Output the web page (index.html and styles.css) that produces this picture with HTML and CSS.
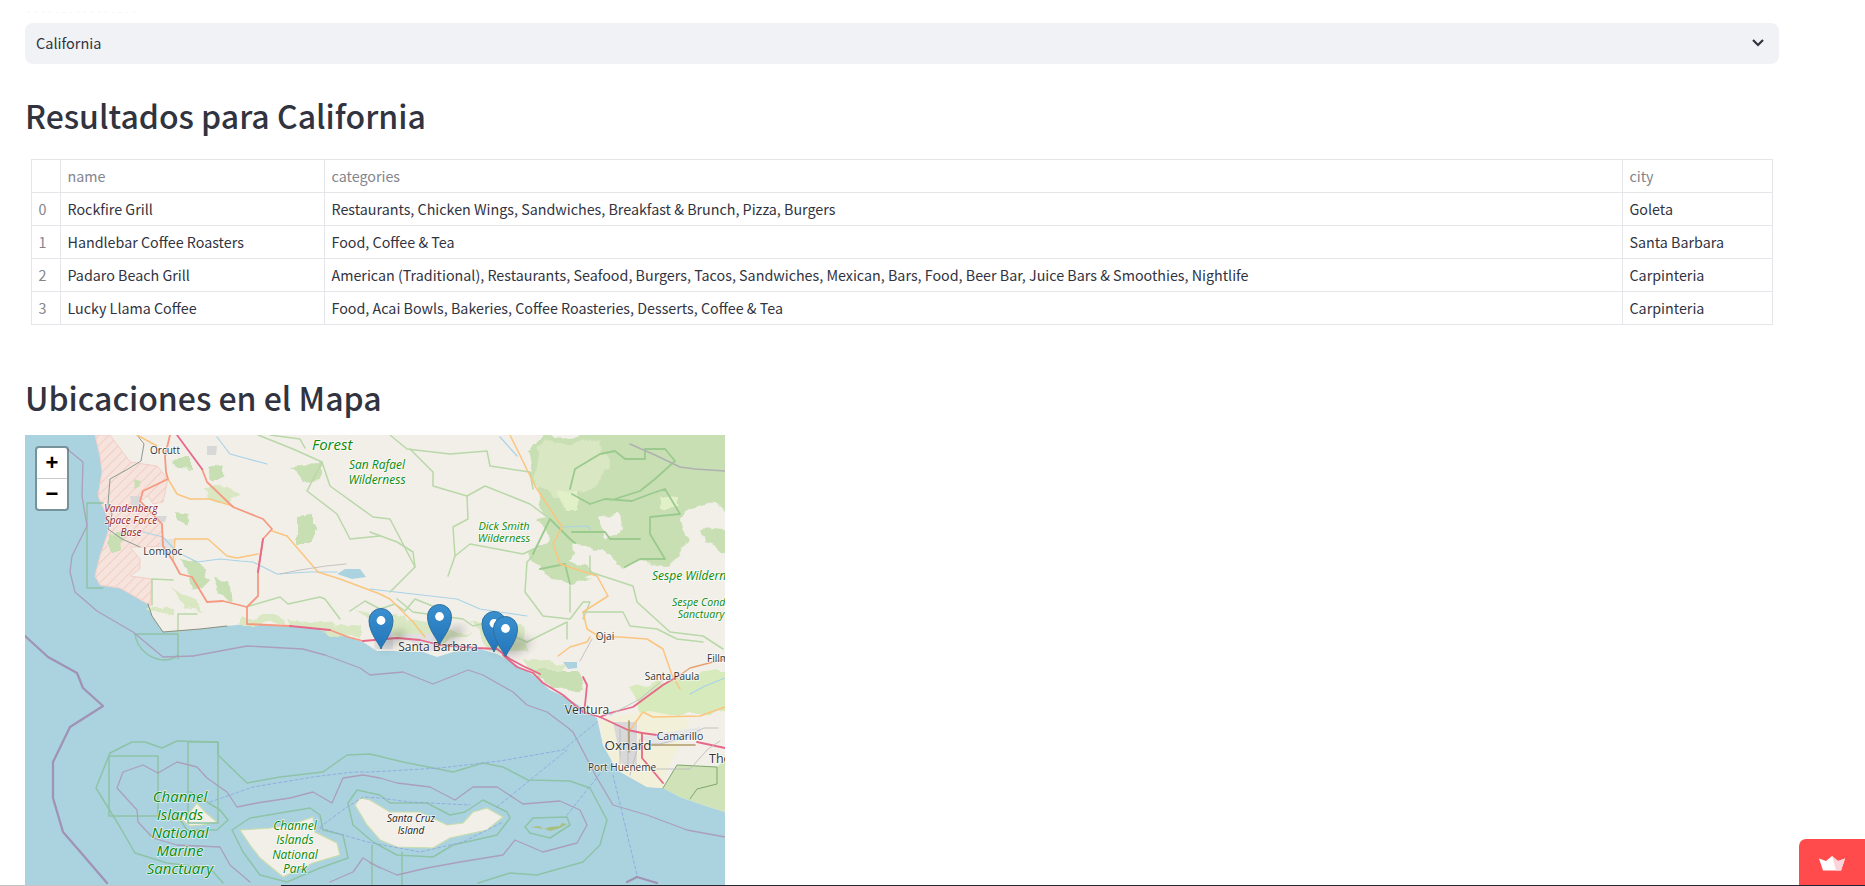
FILE: index.html
```html
<!DOCTYPE html>
<html lang="es">
<head>
<meta charset="utf-8">
<title>Resultados para California</title>
<link rel="stylesheet" href="styles.css">
</head>
<body>
<div class="ghost-label"></div>
<main class="page">
  <div class="select">
    <span class="select-value">California</span>
    <svg class="chevron" width="16" height="16" viewBox="0 0 16 16"><path d="M3 5l5 5 5-5" fill="none" stroke="#31333f" stroke-width="2.200"/></svg>
  </div>
  <h2 class="heading first">Resultados para California</h2>
  <div class="table-wrap">
    <table class="data">
      <colgroup><col class="c0"><col class="c1"><col class="c2"><col class="c3"></colgroup>
      <thead><tr><th></th><th>name</th><th>categories</th><th>city</th></tr></thead>
      <tbody>
        <tr><th>0</th><td>Rockfire Grill</td><td>Restaurants, Chicken Wings, Sandwiches, Breakfast &amp; Brunch, Pizza, Burgers</td><td>Goleta</td></tr>
        <tr><th>1</th><td>Handlebar Coffee Roasters</td><td>Food, Coffee &amp; Tea</td><td>Santa Barbara</td></tr>
        <tr><th>2</th><td>Padaro Beach Grill</td><td>American (Traditional), Restaurants, Seafood, Burgers, Tacos, Sandwiches, Mexican, Bars, Food, Beer Bar, Juice Bars &amp; Smoothies, Nightlife</td><td>Carpinteria</td></tr>
        <tr><th>3</th><td>Lucky Llama Coffee</td><td>Food, Acai Bowls, Bakeries, Coffee Roasteries, Desserts, Coffee &amp; Tea</td><td>Carpinteria</td></tr>
      </tbody>
    </table>
  </div>
  <h2 class="heading second">Ubicaciones en el Mapa</h2>
  <div class="map">
    <svg class="tiles" width="700" height="450" viewBox="25 436 700 450">
      <defs>
        <pattern id="hatch" width="7" height="7" patternUnits="userSpaceOnUse" patternTransform="rotate(-45)">
          <rect width="7" height="7" fill="#f6e3dc"/><rect width="7" height="1" fill="#f0cdc6"/>
        </pattern>
        <linearGradient id="pinfill" x1="0" y1="0" x2="0" y2="1"><stop offset="0" stop-color="#3a90cf"/><stop offset="1" stop-color="#2375ba"/></linearGradient>
        <filter id="blur1" x="-40%" y="-40%" width="180%" height="180%"><feGaussianBlur stdDeviation="4"/></filter>
        <filter id="organic" x="-5%" y="-5%" width="110%" height="110%">
          <feTurbulence type="fractalNoise" baseFrequency="0.05" numOctaves="3" seed="4"/>
          <feDisplacementMap in="SourceGraphic" scale="14" xChannelSelector="R" yChannelSelector="G"/>
          <feGaussianBlur stdDeviation="0.7"/>
        </filter>
        <filter id="soft" x="0" y="0" width="100%" height="100%"><feGaussianBlur stdDeviation="0.35"/></filter>
        <g id="pin">
          <path d="M0 0C-2-6-12-16-12-28.500a12 12 0 0 1 24 0C12-16 2-6 0 0z" fill="url(#pinfill)" stroke="#2f6f9f" stroke-width="1"/>
          <circle cx="0" cy="-28.500" r="4.400" fill="#fff"/>
        </g>
      </defs>
      <rect x="25" y="436" width="700" height="450" fill="#aad3df"/>

      <g filter="url(#soft)">
      <!-- land -->
      <path fill="#f2efe9" d="M95 436L100 457 102 473 98 497 107 517 108 533 100 557 95 577 100 586 120 589 148 605 152 617 163 633 200 630 227 627 247 625 287 627 327 630 348 638 363 643 377 652 393 652 423 653 437 658 453 653 480 650 497 655 510 662 520 668 533 676 550 691 567 699 583 709 597 719 603 746 617 771 647 788 663 789 680 798 703 806 725 813V436z"/>
      <path fill="#f2efe9" stroke="#c8dcae" stroke-width="1.200" d="M240 831L270 829 292 825 313 818 315 833 337 844 340 856 313 864 283 878 260 859 250 846z"/>
      <path fill="#f2efe9" stroke="#c8dcae" stroke-width="1.200" d="M355 806L360 799 370 801 390 813 420 813 447 826 463 824 473 813 487 809 503 818 487 831 450 839 433 849 397 848 380 841 367 826z"/>
      <path fill="#f2efe9" stroke="#c8dcae" stroke-width="1.200" d="M190 813L197 804 205 813 217 823 202 826 190 827 180 819z"/>
      <path fill="#a9bf7c" d="M531 828l8-1 5 3 6-2 10-1 2-3 5 1-7 4-10 3-5-2-8-1z"/>

      <!-- vandenberg -->
      <path fill="url(#hatch)" stroke="#f3cfc8" stroke-width="1" d="M95 436L100 457 102 473 98 497 107 517 108 533 100 557 95 577 100 586 120 589 148 605 150 607 152 580 130 577 140 570 140 560 130 548 143 548 163 547 162 525 140 502 148 497 153 505 163 503 168 480 157 467 130 463 110 436z"/>

      <!-- vegetation -->
      <g fill="#c7dfb3" filter="url(#organic)">
        <path d="M527 447L543 440 637 430 735 430 735 510 700 505 690 510 680 520 690 540 680 555 665 565 640 562 625 568 605 555 590 550 575 545 570 560 595 575 575 580 550 575 535 560 530 555 550 540 535 520 550 518 535 490 530 465z"/>
        <path d="M700 530L735 533 735 553 703 543z"/>
        <path d="M287 467L320 465 320 480 305 482z"/>
        <path d="M297 517L315 515 315 545 297 545z"/>
        <path d="M207 465L227 462 225 480 210 480z"/>
        <path d="M177 513L188 515 187 525 177 522z"/>
        <path d="M170 460L190 458 190 473 175 472z"/>
        <path d="M180 560L200 565 210 585 190 590z"/>
        <path d="M213 580L227 582 230 600 218 596z"/>
        <path d="M110 537L122 535 123 550 110 550z"/>
        <path d="M133 480L142 482 140 488 134 487z"/>
        <path d="M530 670L580 670 583 690 553 691z"/>
        <path d="M530 555L575 570 590 580 570 585 545 575z"/>
      </g>
      <path fill="#cfe2b8" d="M663 789L677 766 717 768 725 760 725 813 703 806 680 798z"/>
      <g fill="#d9e8c2" filter="url(#organic)">
        <path d="M540 445L600 440 610 470 590 490 560 500 535 487z"/>
        <path d="M558 495L578 493 578 510 565 510z" fill="#e2f0c8"/>
        <path d="M660 497L678 498 678 510 662 510z" fill="#e2f0c8"/>
        <path d="M208 487L240 495 225 505 210 500z"/>
        <path d="M240 617L280 617 285 625 240 625z"/>
        <path d="M287 620L360 630 360 640 290 626z"/>
        <path d="M173 590L195 600 205 612 185 610z"/>
        <path d="M145 608L175 610 175 615 150 614z"/>
        <path d="M360 610L430 625 470 635 440 645 380 635z"/>
        <path d="M470 625L520 625 530 650 490 648z"/>
        <path d="M633 690L665 680 735 670 735 710 680 715 640 716z" fill="#d6eabb"/>
        <path d="M525 660L565 664 560 672 530 672z"/>
      </g>
      <path fill="#f2efe9" d="M597 518L620 515 623 530 608 540 603 530z" filter="url(#organic)"/>
      <path fill="#f2f0d8" d="M600 722L625 716 650 712 690 720 680 745 665 775 663 789 647 788 617 771 603 746z"/>
      <g fill="#d8d8d8">
        <path d="M207 447L217 447 216 456 207 456z"/>
        <path d="M130 497L140 497 140 507 132 508z"/>
        <path d="M157 517L167 517 165 523 157 523z"/>
        <path d="M160 540L175 540 172 550 160 548z" fill="#e2e2e2"/>
        <path d="M373 633L393 633 393 650 375 650z" fill="#e0e0e0"/>
        <path d="M400 635L440 635 440 653 420 650z" fill="#e0e0e0"/>
        <path d="M613 723L637 723 637 766 622 766z"/>
        <path d="M640 738L700 728 702 736 655 748z" fill="#e6e6e6"/>
      </g>
      <!-- water inland -->
      <path fill="#aad3df" d="M337 575L345 570 360 570 366 578 352 580z"/>
      <path fill="#aad3df" d="M563 663L577 663 577 669 568 670z"/>
      <g class="ln" stroke="#a9d3e6" stroke-width="1.200">
        <path d="M143 533L163 538 177 553 197 563 220 560 240 562 253 563 277 575 310 573 337 573"/>
        <path d="M370 590L413 595 457 600 480 610 527 617"/>
        <path d="M217 438L230 455 267 465"/>
        <path d="M500 438L517 457"/>
        <path d="M563 528L587 527 590 530"/>
        <path d="M690 695L705 687 725 679"/>
      </g>

      <!-- protected areas, light -->
      <g class="ln" stroke="#b9d8a8" stroke-width="1.500">
        <path d="M258 436L293 450 322 463 307 492 337 515 350 540 380 537"/>
        <path d="M322 463L330 487 373 518 390 520 415 568 390 593"/>
        <path d="M370 533L397 543 413 553 415 568"/>
        <path d="M390 436L407 450 450 455 487 452 490 467 530 473 533 490"/>
        <path d="M410 450L433 473 433 487 467 497 468 520 453 528 455 557 448 577"/>
        <path d="M455 557L470 545 497 550 523 555 540 547"/>
        <path d="M467 497L485 487 530 505 550 520"/>
        <path d="M533 557L527 563 525 593 543 617 570 620 583 603 590 603 583 620"/>
        <path d="M570 587L570 613"/>
        <path d="M590 557L590 573 633 587 637 603 670 633 703 637 723 650"/>
        <path d="M583 613L623 613 630 627 657 630 677 640 703 643"/>
        <path d="M397 600L413 613 463 620 473 627 503 620 513 637 527 643 567 623 567 640"/>
        <path d="M173 581L152 580 152 606"/>
        <path d="M178 635L178 615 197 615"/>
        <path d="M246 608L280 598 288 605 320 598 325 600 340 620"/>
        <path d="M350 612L365 602 380 610 395 605 405 612 415 600 440 610"/>
        <path d="M270 436L300 440 305 449"/>
      </g>
      <g class="ln" stroke="#9bca8e" stroke-width="1.800">
        <path d="M570 490L575 470 600 455 615 452 625 460 645 460 645 450 665 450 675 462 655 480 640 492 615 500"/>
        <path d="M572 495L590 505 605 500 632 502 650 495 665 490 680 515 650 518 650 535 665 560 640 560 625 568"/>
        <path d="M533 555L550 520 570 540 575 544"/>
        <path d="M572 533H605L610 540 640 540"/>
        <path d="M540 570L565 565 570 585"/>
      </g>
      <path class="ln" stroke="#7fa76b" stroke-width="1" d="M663 789L677 766 717 768 717 785 697 790 690 800"/>

      <!-- coastal guides -->
      <g class="ln" stroke="#8ec3a7" stroke-width="1.500">
        <path d="M103 504H87V589H103"/>
        <path d="M135 635H178V660"/>
        <path d="M135 635C137 650 150 660 163 661 170 661 175 659 178 656"/>
        <path d="M109 757H158V817H109z"/>
        <path d="M188 743H218V824H188z"/>
        <path d="M110 754L132 743 145 743 162 749 177 742 218 743 218 756 247 784 280 778 323 773 347 756 370 755 403 763 453 773 483 764 503 768 528 781 570 782 590 789 607 821 600 846 583 863 537 876 510 874 478 884"/>
        <path d="M110 754L96 789 120 828 135 854 167 864 210 869 223 884"/>
        <path d="M190 793L207 803 220 811 228 821 217 831 187 831 177 816"/>
        <path d="M232 831L250 819 280 814 310 809 320 816 323 831 343 836 348 859 320 869 287 883 260 876 243 853z"/>
        <path d="M348 804L357 791 380 796 390 804 427 804 450 816 465 813 483 801 507 813 510 819 497 836 453 846 433 858 397 856 373 843 353 826z"/>
        <path d="M525 828L533 819 567 818 570 826 550 839 530 834z"/>
        <path d="M372 846V886M402 853V886"/>
      </g>

      <!-- purple boundaries -->
      <g class="ln" stroke="#ab9fbb" stroke-width="1.300">
        <path d="M158 774L177 763 197 768 207 779 227 793 237 808 257 804 290 799 313 793 332 804 343 779 363 776 380 779 397 784 430 788 455 801 473 788 497 788 523 805 560 802 580 811 587 826 577 844 543 853 515 841 503 856 460 863 427 869 397 876 370 864"/>
        <path d="M158 774L143 766 123 773 117 789 137 811 138 823 153 839 177 846 220 848 230 866 250 883"/>
        <path d="M363 859L353 873 330 883M363 859L380 869"/>
        <path d="M193 657L247 647 303 650 325 656 360 669 370 676 403 673 433 685 468 671 483 676 513 693 527 706 547 713 567 728 573 733 597 779 613 806 647 816 687 831 725 838"/>
        <path d="M67 450L83 463 82 497 87 527 72 557 70 573 75 593 97 612 133 633 163 658 193 657"/>
      </g>
      <g class="ln" stroke="#a093b3" stroke-width="2.300">
        <path d="M25 637L48 658 77 674 83 689 103 707 70 728 53 763 53 799 63 833 83 856 107 884"/>
        <path d="M627 883L637 878 657 884"/>
      </g>
      <path class="ln" stroke="#8d9a94" stroke-width="1" d="M137 436L144 445 141 462 128 470 110 480 108 505 112 515 108 530 122 540 140 548"/>
      <path class="ln" stroke="#8a8f7a" stroke-width="1" d="M148 605L152 617 163 633 200 630 227 627"/>

      <!-- dashed ferry lines -->
      <g class="ln" stroke="#8fa8de" stroke-width=".900" stroke-dasharray="3 2.500">
        <path d="M210 803L253 788 313 778 353 773 370 773 440 769 500 762 563 751 597 723"/>
        <path d="M497 808L567 751"/>
        <path d="M320 828L347 808 363 798 380 799 410 803 470 806"/>
        <path d="M320 829L367 843 420 853 463 843 503 823"/>
        <path d="M567 816L603 771 613 765"/>
        <path d="M613 776L637 876"/>
      </g>

      <!-- roads -->
      <g class="ln" stroke="#fbc57f" stroke-width="1.500">
        <path d="M137 436L157 447"/>
        <path d="M168 480L177 495 190 500 210 500 233 507"/>
        <path d="M272 532L287 537 318 573 340 580 380 595 390 600 413 623 425 638"/>
        <path d="M175 540L208 540 227 557 237 559 258 555"/>
        <path d="M175 540L173 562"/>
        <path d="M510 436L535 487 562 528 553 545 560 565 597 577 608 597 583 613 587 630 600 638 620 638 647 640 663 650 665 656 672 676 680 690"/>
        <path d="M558 657L570 648 587 643 590 638"/>
        <path d="M630 731L643 713 653 718 700 717 725 708"/>
      </g>
      <g class="ln" stroke="#f59a80" stroke-width="1.800">
        <path d="M170 436L165 457 166 473 168 480 143 492 140 502 162 525 163 547 173 562 180 575 192 578 207 603 223 602 247 608"/>
        <path d="M202 470L207 483 233 508 263 520 272 530 263 540 258 573"/>
        <path d="M258 573L258 597 247 608 247 625 290 627"/>
        <path d="M330 631L348 638 363 642"/>
      </g>
      <g class="ln" stroke="#e6688a" stroke-width="1.800">
        <path d="M177 436L202 470"/>
        <path d="M263 540L258 573"/>
        <path d="M290 627L330 631"/>
        <path d="M363 642L397 639 420 641 440 646 477 649 497 650 510 660 523 667 540 675"/>
        <path d="M503 656L517 668 533 674 543 684 563 696 583 713 600 718 610 714 633 708 663 686 680 676"/>
        <path d="M583 678L587 686 585 706 583 713"/>
        <path d="M600 718L628 731 642 734 657 736"/>
        <path d="M642 734L642 759 663 784"/>
        <path d="M697 743L725 749"/>
      </g>
      <path class="ln" stroke="#e8a070" stroke-width="1.300" d="M680 676L690 669 713 663 725 660"/>
      <g class="ln" stroke="#bdbdbd" stroke-width=".900">
        <path d="M280 575L300 571 326 567 346 565"/>
        <path d="M610 716L640 700 664 680"/>
        <path d="M620 730V765M628 732V768M618 745H660M660 745L682 739 704 729 718 729M640 740L630 776"/>
        <path d="M650 770H690L708 750 720 742"/>
        <path d="M630 445L655 456 680 468 695 470 725 472" stroke="#b0b0b0" stroke-width="1.400"/>
        <path d="M592 640L580 662"/>
      </g>
      <path class="ln" stroke="#b09a6a" stroke-width="1.600" d="M629 722V753M650 746H695"/>
      </g>

      <!-- labels -->
      <g class="lbl-g">
        <text class="it" x="312" y="451" font-size="15">Forest</text>
        <text class="it mid" x="377" y="470" font-size="12">San Rafael</text>
        <text class="it mid" x="377" y="485" font-size="12">Wilderness</text>
        <text class="it mid" x="504" y="531" font-size="11">Dick Smith</text>
        <text class="it mid" x="504" y="543" font-size="11">Wilderness</text>
        <text class="it" x="652" y="581" font-size="12">Sespe Wilderness</text>
        <text class="it" x="672" y="607" font-size="10.500">Sespe Condor</text>
        <text class="it mid" x="701" y="619" font-size="10.500">Sanctuary</text>
        <text class="it mid" x="180" y="803" font-size="15">Channel</text>
        <text class="it mid" x="180" y="821" font-size="15">Islands</text>
        <text class="it mid" x="180" y="839" font-size="15">National</text>
        <text class="it mid" x="180" y="857" font-size="15">Marine</text>
        <text class="it mid" x="180" y="875" font-size="15">Sanctuary</text>
        <text class="it mid" x="295" y="831" font-size="12">Channel</text>
        <text class="it mid" x="295" y="845" font-size="12">Islands</text>
        <text class="it mid" x="295" y="860" font-size="12">National</text>
        <text class="it mid" x="295" y="874" font-size="12">Park</text>
        <text class="red mid" x="131" y="513" font-size="10">Vandenberg</text>
        <text class="red mid" x="131" y="525" font-size="10">Space Force</text>
        <text class="red mid" x="131" y="537" font-size="10">Base</text>
        <text class="isl mid" x="411" y="823" font-size="10">Santa Cruz</text>
        <text class="isl mid" x="411" y="835" font-size="10">Island</text>
        <text class="city mid" x="165" y="455" font-size="10">Orcutt</text>
        <text class="city mid" x="163" y="556" font-size="10.500">Lompoc</text>
        <text class="city mid" x="438" y="652" font-size="12">Santa Barbara</text>
        <text class="city mid" x="605" y="641" font-size="10">Ojai</text>
        <text class="city" x="707" y="663" font-size="10">Fillmore</text>
        <text class="city mid" x="672" y="681" font-size="10">Santa Paula</text>
        <text class="city mid" x="587" y="715" font-size="12">Ventura</text>
        <text class="city mid" x="628" y="751" font-size="13.500">Oxnard</text>
        <text class="city mid" x="680" y="741" font-size="10.500">Camarillo</text>
        <text class="city mid" x="622" y="772" font-size="10">Port Hueneme</text>
        <text class="city" x="709" y="764" font-size="12.500">Thousand Oaks</text>
      </g>

      <!-- marker shadows -->
      <g fill="#333" opacity=".24" filter="url(#blur1)">
        <ellipse cx="393" cy="640" rx="15" ry="6" transform="rotate(-30 393 640)"/>
        <ellipse cx="451" cy="636" rx="15" ry="6" transform="rotate(-30 451 636)"/>
        <ellipse cx="506" cy="643" rx="15" ry="6" transform="rotate(-30 506 643)"/>
        <ellipse cx="518" cy="648" rx="15" ry="6" transform="rotate(-30 518 648)"/>
      </g>
      <use href="#pin" x="381" y="650"/>
      <use href="#pin" x="439.500" y="646"/>
      <use href="#pin" x="494" y="653"/>
      <use href="#pin" x="505.500" y="658"/>
    </svg>
    <div class="zoom">
      <span class="zoom-btn">+</span>
      <span class="zoom-btn">&minus;</span>
    </div>
  </div>
</main>
<div class="badge">
  <svg width="28" height="16" viewBox="0 0 28 16"><path d="M1 3.500l7 2.500 6-5 6 5 7-2.500-4 12H5z" fill="#fff"/><path d="M14 1l6 5 7-2.500-4 12h-5z" fill="#fbd3da"/></svg>
</div>
<div class="bar"></div>
</body>
</html>
```
FILE: styles.css
```css
html, body {
  margin: 0;
  height: 100%;
  overflow: hidden;
  background: #fff;
}
body {
  font-family: "Noto Sans CJK JP", "Noto Sans", sans-serif;
  color: #31333f;
}
.ghost-label {
  position: fixed;
  left: 28px;
  top: 12px;
  width: 112px;
  height: 1px;
  background: repeating-linear-gradient(90deg, #f3f3f5 0 2px, transparent 2px 7px);
}
.page {
  padding: 23px 0 0 25px;
  width: 1754px;
}
.select {
  height: 41px;
  background: #f0f2f6;
  border-radius: 8px;
  display: flex;
  align-items: center;
  justify-content: space-between;
  padding: 0 13px 0 11px;
  font-size: 14.500px;
}
.select-value { margin-bottom: 2px; }
.chevron { margin-bottom: 2px; }
.heading {
  margin: 0;
  font-weight: 500;
  font-size: 32px;
  line-height: 44px;
}
.first { margin-top: 29px; }
.second { margin-top: 50px; }
.table-wrap {
  margin: 22px 0 0 6px;
}
.data {
  border-collapse: collapse;
  table-layout: fixed;
  width: 1741px;
  font-size: 14.300px;
}
.c0 { width: 29px; }
.c1 { width: 264px; }
.c2 { width: 1298px; }
.c3 { width: 150px; }
.data th, .data td {
  border: 1px solid #e6e6ea;
  height: 32px;
  padding: 0 6px 0 6.500px;
  line-height: 18px;
  font-weight: 400;
  text-align: left;
  white-space: nowrap;
}
.data th { color: #83848c; }
.map {
  position: relative;
  width: 700px;
  height: 450px;
  overflow: hidden;
  margin-top: 16px;
}
.tiles { display: block; }
.ln { fill: none; stroke-linejoin: round; stroke-linecap: round; }
.lbl-g text { font-family: "Open Sans", sans-serif; paint-order: stroke; stroke: rgba(255,255,255,.7); stroke-width: 1.500px; }
.mid { text-anchor: middle; }
.it { font-style: italic; fill: #0b8a0b; }
.red { font-style: italic; fill: #8f1b2b; }
.isl { font-style: italic; fill: #222; }
.city { fill: #333; }
.zoom {
  position: absolute;
  left: 10px;
  top: 11px;
  width: 30px;
  display: flex;
  flex-direction: column;
  background: #fff;
  border: 2px solid rgba(0,0,0,.3);
  border-radius: 4px;
  background-clip: padding-box;
}
.zoom-btn {
  height: 30px;
  text-align: center;
  font: 700 22px/30px "Liberation Sans", sans-serif;
  color: #000;
}
.zoom-btn + .zoom-btn { border-top: 1px solid #ccc; }
.badge {
  position: fixed;
  right: 0;
  bottom: 0;
  width: 66px;
  height: 47px;
  background: #ff4b4b;
  border-top-left-radius: 7px;
  display: flex;
  align-items: center;
  justify-content: center;
}
.bar {
  position: fixed;
  left: 0;
  right: 0;
  bottom: 0;
  height: 1px;
  background: linear-gradient(90deg, #c4c4c4 281px, #262730 281px);
}
```
